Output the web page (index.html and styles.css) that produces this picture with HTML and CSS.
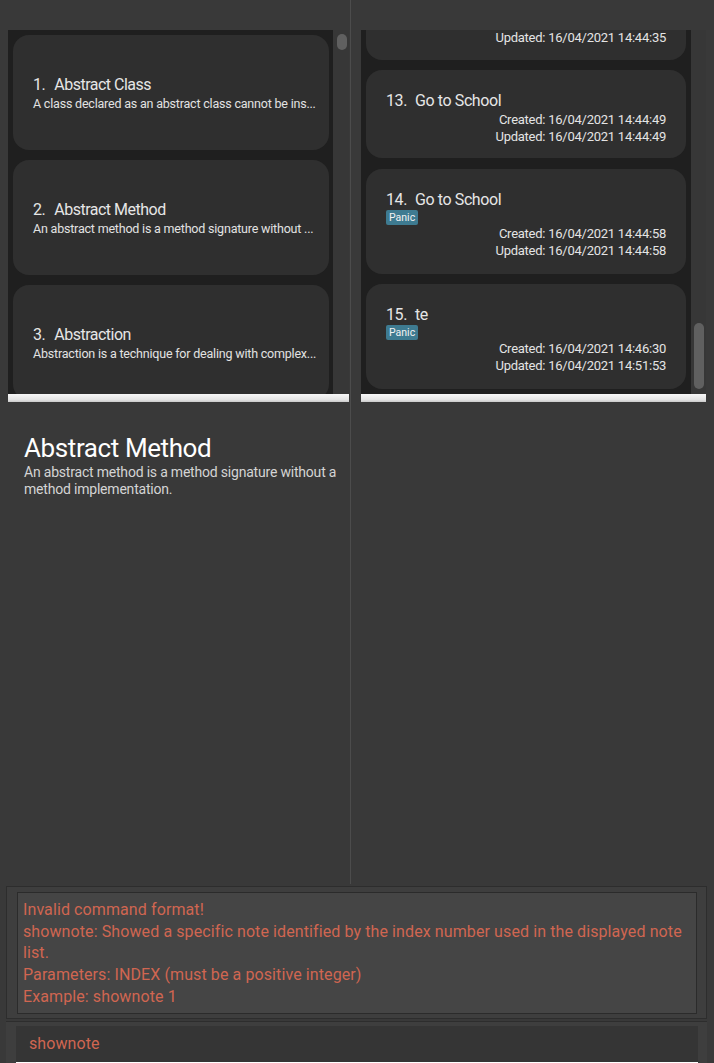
FILE: index.html
```html
<!DOCTYPE html>
<html lang="en">
<head>
<meta charset="utf-8">
<title>Notes</title>
<link rel="stylesheet" href="styles.css">
</head>
<body>
<div class="app">
  <div class="main">
    <section class="pane pane-left">
      <div class="listbox listbox-left">
        <div class="viewport">
          <div class="items items-left">
            <div class="card card-note">
              <div class="title"><span class="idx">1.</span><span>Abstract Class</span></div>
              <div class="desc">A class declared as an abstract class cannot be ins...</div>
            </div>
            <div class="card card-note">
              <div class="title"><span class="idx">2.</span><span>Abstract Method</span></div>
              <div class="desc">An abstract method is a method signature without ...</div>
            </div>
            <div class="card card-note">
              <div class="title"><span class="idx">3.</span><span>Abstraction</span></div>
              <div class="desc">Abstraction is a technique for dealing with complex...</div>
            </div>
          </div>
        </div>
        <div class="vtrack vtrack-left"><div class="thumb thumb-left"></div></div>
        <div class="hbar"></div>
      </div>
      <div class="detail">
        <h1 class="detail-title">Abstract Method</h1>
        <p class="detail-text">An abstract method is a method signature without a method implementation.</p>
      </div>
    </section>
    <div class="divider"></div>
    <section class="pane pane-right">
      <div class="listbox listbox-right">
        <div class="viewport">
          <div class="items items-right">
            <div class="card card-task card-partial">
              <div class="date">Updated: 16/04/2021 14:44:35</div>
            </div>
            <div class="card card-task">
              <div class="title"><span class="idx">13.</span><span>Go to School</span></div>
              <div class="date">Created: 16/04/2021 14:44:49</div>
              <div class="date">Updated: 16/04/2021 14:44:49</div>
            </div>
            <div class="card card-task card-tagged card-wide-gap">
              <div class="title"><span class="idx">14.</span><span>Go to School</span></div>
              <div class="tags"><span class="tag">Panic</span></div>
              <div class="date">Created: 16/04/2021 14:44:58</div>
              <div class="date">Updated: 16/04/2021 14:44:58</div>
            </div>
            <div class="card card-task card-tagged">
              <div class="title"><span class="idx">15.</span><span>te</span></div>
              <div class="tags"><span class="tag">Panic</span></div>
              <div class="date">Created: 16/04/2021 14:46:30</div>
              <div class="date">Updated: 16/04/2021 14:51:53</div>
            </div>
          </div>
        </div>
        <div class="vtrack vtrack-right"><div class="thumb thumb-right"></div></div>
        <div class="hbar"></div>
      </div>
    </section>
  </div>
  <div class="result-outer">
    <div class="result-inner">
      <p class="result-line">Invalid command format!</p>
      <p class="result-line">shownote: Showed a specific note identified by the index number used in the displayed note list.</p>
      <p class="result-line">Parameters: INDEX (must be a positive integer)</p>
      <p class="result-line">Example: shownote 1</p>
    </div>
  </div>
  <div class="command-outer">
    <div class="command-inner">shownote</div>
  </div>
</div>
</body>
</html>
```

FILE: styles.css
```css
* { box-sizing: border-box; }

html, body {
  margin: 0;
  padding: 0;
  background: #393939;
}

body {
  width: 714px;
  height: 1063px;
  overflow: hidden;
  font-family: Roboto, "Liberation Sans", sans-serif;
  color: #e2e2e2;
}

.app {
  display: flex;
  flex-direction: column;
  height: 1063px;
}

.main {
  display: flex;
  height: 886px;
}

.pane-left {
  width: 350px;
  display: flex;
  flex-direction: column;
}

.divider {
  width: 1px;
  height: 884px;
  background: #4c4c4c;
}

.pane-right {
  flex: 1;
}

.listbox {
  display: grid;
  margin-top: 30px;
}

.listbox-left {
  margin-left: 8px;
  grid-template-columns: 325px 16px;
  grid-template-rows: 364px 8px;
}

.listbox-right {
  margin-left: 10px;
  grid-template-columns: 330px 15px;
  grid-template-rows: 364px 8px;
}

.viewport {
  background: #1f1f1f;
  overflow: hidden;
}

.items {
  display: flex;
  flex-direction: column;
  gap: 10px;
}

.items-left {
  padding: 5px 4px 0 5px;
}

.items-right {
  padding: 0 5px;
  margin-top: -58px;
}

.vtrack {
  background: #373737;
}

.thumb {
  background: #606060;
  border-radius: 5px;
  width: 10px;
}

.thumb-left {
  margin: 4px 0 0 4px;
  height: 16px;
}

.thumb-right {
  margin: 293px 0 0 3px;
  height: 66px;
}

.hbar {
  grid-column: 1 / -1;
  background: linear-gradient(#f7f7f7, #e4e4e4 70%, #c9c9c9);
}

.card {
  background: #2f2f2f;
  border-radius: 16px;
  flex-shrink: 0;
}

.card-note {
  height: 115px;
  display: flex;
  flex-direction: column;
  justify-content: center;
  padding: 2px 0 0 20px;
}

.card-task {
  padding: 21px 20px 13px 20px;
}

.card-partial {
  padding-top: 57px;
  padding-bottom: 14px;
}

.card-tagged {
  padding-bottom: 15px;
}

.card-wide-gap {
  margin-top: 1px;
}

.title {
  font-size: 16px;
  line-height: 20px;
  color: #e6e6e6;
  white-space: nowrap;
  letter-spacing: -0.4px;
}

.card-note .title {
  letter-spacing: -0.5px;
}

.idx {
  margin-right: 9px;
}

.card-task .idx {
  margin-right: 8px;
}

.desc {
  font-size: 12.5px;
  line-height: 17px;
  color: #e2e2e2;
  white-space: nowrap;
  letter-spacing: -0.2px;
}

.tags {
  height: 15px;
  display: flex;
}

.tag {
  background: #3e7b91;
  color: #f2f2f2;
  font-size: 10.5px;
  line-height: 15px;
  padding: 0 3px;
  border-radius: 2px;
}

.date {
  text-align: right;
  font-size: 13px;
  line-height: 17px;
  color: #e4e4e4;
  letter-spacing: -0.25px;
  white-space: nowrap;
}

.detail {
  padding: 31px 12px 0 24px;
}

.detail-title {
  margin: 0;
  font-size: 26px;
  font-weight: 400;
  line-height: 30px;
  color: #ffffff;
  letter-spacing: -0.4px;
}

.detail-text {
  margin: 1px 0 0 0;
  font-size: 14px;
  line-height: 17px;
  color: #d4d4d4;
  letter-spacing: -0.2px;
}

.result-outer {
  margin: 0 7px 0 6px;
  height: 133px;
  background: #3e3e3e;
  border: 1px solid #2d2d2d;
  padding: 5px 9px 4px 10px;
}

.result-inner {
  height: 122px;
  background: #454545;
  border: 1px solid #2b2b2b;
  padding: 6px 8px 0 5px;
}

.result-line {
  margin: 0;
  font-size: 16px;
  line-height: 21.7px;
  color: #d06651;
  letter-spacing: 0.1px;
}

.command-outer {
  margin: 2px 7px 0 6px;
  flex: 1;
  background: #3e3e3e;
  border-top: 1px solid #2d2d2d;
  padding: 4px 9px 0 10px;
}

.command-inner {
  height: 100%;
  background: #353535;
  border-bottom: 1px solid #ffffff;
  padding-left: 13px;
  font-size: 16px;
  line-height: 36px;
  color: #d06651;
  letter-spacing: 0.1px;
}
```
